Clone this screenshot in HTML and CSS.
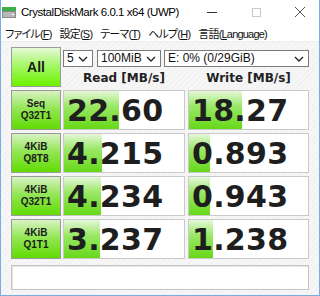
FILE: index.html
```html
<!DOCTYPE html>
<html lang="ja">
<head>
    <meta charset="UTF-8">
    <title>CrystalDiskMark 6.0.1 x64 (UWP)</title>
    <link rel="stylesheet" href="styles.css">
</head>
<body>
    <div class="window">
        <!-- Title bar -->
        <div class="titlebar">
            <svg class="app-icon" width="14" height="11" viewBox="0 0 14 11">
                <rect x="0" y="0" width="14" height="4" fill="#3cb043"/>
                <rect x="0" y="4" width="14" height="7" fill="#8a8a8a"/>
                <rect x="1" y="5" width="12" height="5" fill="#b8b8b8"/>
                <rect x="10" y="7" width="2" height="1" fill="#ffffff"/>
            </svg>
            <span class="title">CrystalDiskMark 6.0.1 x64 (UWP)</span>
            <div class="controls">
                <svg width="12" height="12" viewBox="0 0 12 12"><line x1="1" y1="6.5" x2="11" y2="6.5" stroke="#333" stroke-width="1"/></svg>
                <svg width="12" height="12" viewBox="0 0 12 12"><rect x="2.5" y="2.5" width="8" height="8" fill="none" stroke="#c8c8c8" stroke-width="1"/></svg>
                <svg width="12" height="12" viewBox="0 0 12 12"><path d="M1 1 L11 11 M11 1 L1 11" stroke="#555" stroke-width="1"/></svg>
            </div>
        </div>

        <!-- Menu bar -->
        <div class="menubar">
            <span>ファイル(<u>F</u>)</span>
            <span>設定(<u>S</u>)</span>
            <span>テーマ(<u>T</u>)</span>
            <span>ヘルプ(<u>H</u>)</span>
            <span>言語(<u>L</u>anguage)</span>
        </div>

        <!-- Benchmark grid -->
        <div class="content">
            <div class="bench">
                <div class="btn all-btn">All</div>
                <div class="top-right">
                    <div class="selects">
                        <div class="select sel-count">5<svg class="chev" width="10" height="6" viewBox="0 0 10 6"><path d="M1 1 L5 5 L9 1" fill="none" stroke="#222" stroke-width="1.3"/></svg></div>
                        <div class="select sel-size">100MiB<svg class="chev" width="10" height="6" viewBox="0 0 10 6"><path d="M1 1 L5 5 L9 1" fill="none" stroke="#222" stroke-width="1.3"/></svg></div>
                        <div class="select sel-drive">E: 0% (0/29GiB)<svg class="chev" width="10" height="6" viewBox="0 0 10 6"><path d="M1 1 L5 5 L9 1" fill="none" stroke="#222" stroke-width="1.3"/></svg></div>
                    </div>
                    <div class="heads">
                        <div class="head">Read [MB/s]</div>
                        <div class="head write">Write [MB/s]</div>
                    </div>
                </div>

                <div class="btn row-btn">Seq<br>Q32T1</div>
                <div class="value" style="background-size: 55px 100%">22.60</div>
                <div class="value write" style="background-size: 53px 100%">18.27</div>

                <div class="btn row-btn">4KiB<br>Q8T8</div>
                <div class="value" style="background-size: 38px 100%">4.215</div>
                <div class="value write" style="background-size: 21px 100%">0.893</div>

                <div class="btn row-btn">4KiB<br>Q32T1</div>
                <div class="value" style="background-size: 37px 100%">4.234</div>
                <div class="value write" style="background-size: 21px 100%">0.943</div>

                <div class="btn row-btn">4KiB<br>Q1T1</div>
                <div class="value" style="background-size: 36px 100%">3.237</div>
                <div class="value write" style="background-size: 24px 100%">1.238</div>
            </div>

            <div class="status"></div>
        </div>
    </div>
</body>
</html>
```

FILE: styles.css
```css
html, body {
    margin: 0;
    padding: 0;
}
body {
    width: 320px;
    height: 296px;
    overflow: hidden;
    font-family: "Liberation Sans", "Noto Sans CJK JP", sans-serif;
    color: #111;
}
.window {
    width: 320px;
    height: 296px;
    box-sizing: border-box;
    border: 1px solid #76aee3;
    border-top: none;
    display: flex;
    flex-direction: column;
    background: repeating-linear-gradient(135deg, #f7f7f7 0 2px, #f2f2f2 2px 4px);
}
.titlebar {
    height: 24px;
    background: #ffffff;
    display: flex;
    align-items: center;
    white-space: nowrap;
}
.app-icon {
    margin-left: 1px;
    margin-top: 1px;
    flex-shrink: 0;
}
.title {
    margin-left: 5px;
    font-size: 11.5px;
    letter-spacing: -0.45px;
    color: #000;
}
.controls {
    margin-left: auto;
    display: flex;
    gap: 32px;
    margin-right: 13px;
}
.controls svg {
    display: block;
}
.menubar {
    height: 17px;
    background: #ffffff;
    display: flex;
    align-items: center;
    gap: 8px;
    padding-left: 4px;
    font-size: 11px;
    letter-spacing: -0.8px;
    font-feature-settings: "palt";
    white-space: nowrap;
    border-bottom: 1px solid #ececec;
}
.menubar u {
    text-decoration: underline;
    text-underline-offset: 1px;
}
.content {
    padding: 5px 10px 0 10px;
}
.bench {
    display: grid;
    grid-template-columns: 50px 122px 122px;
    grid-auto-rows: 40px;
    column-gap: 2px;
    row-gap: 3px;
}
.btn {
    box-sizing: border-box;
    border: 1px solid #9a9a9a;
    display: flex;
    align-items: center;
    justify-content: center;
    text-align: center;
    font-weight: bold;
    color: #1c1c1c;
}
.all-btn {
    font-size: 14px;
    background: linear-gradient(to bottom, #e6f9d6 0%, #a6f76a 45%, #6cf200 100%);
}
.row-btn {
    font-size: 10px;
    line-height: 12px;
    background: linear-gradient(to bottom, #d8f2c4 0%, #94e657 45%, #62dc04 100%);
}
.top-right {
    grid-column: 2 / 4;
    display: flex;
    flex-direction: column;
}
.selects {
    display: flex;
    margin-top: 3px;
    height: 17px;
}
.select {
    box-sizing: border-box;
    background: #ffffff;
    border: 1px solid #7a7a7a;
    display: flex;
    align-items: center;
    justify-content: space-between;
    padding: 0 4px 0 3px;
    font-size: 12px;
    line-height: 15px;
    white-space: nowrap;
}
.sel-count {
    width: 30px;
}
.sel-size {
    width: 64px;
    margin-left: 4px;
}
.sel-drive {
    width: 145px;
    margin-left: 3px;
}
.heads {
    flex: 1;
    display: grid;
    grid-template-columns: 122px 122px;
    column-gap: 2px;
    align-items: center;
}
.head {
    text-align: center;
    font-family: "DejaVu Sans", sans-serif;
    font-weight: bold;
    font-size: 12px;
    color: #222;
    padding-top: 2px;
}
.write {
    margin-left: 1px;
}
.value {
    box-sizing: border-box;
    border: 1px solid #c9c9c9;
    background-color: #ffffff;
    background-image: linear-gradient(to bottom, #e6f7da 0%, #9be868 40%, #66d818 100%);
    background-repeat: no-repeat;
    font-family: "DejaVu Sans", sans-serif;
    font-weight: bold;
    font-size: 30px;
    line-height: 38px;
    padding: 1px 0 0 3px;
    color: #1e1e1e;
    letter-spacing: 0.3px;
}
.status {
    margin-top: 6px;
    height: 25px;
    box-sizing: border-box;
    background: #ffffff;
    border: 1px solid #c4c4c4;
    box-shadow: inset 1px 1px 0 #e6e6e6;
    width: 298px;
}
```
